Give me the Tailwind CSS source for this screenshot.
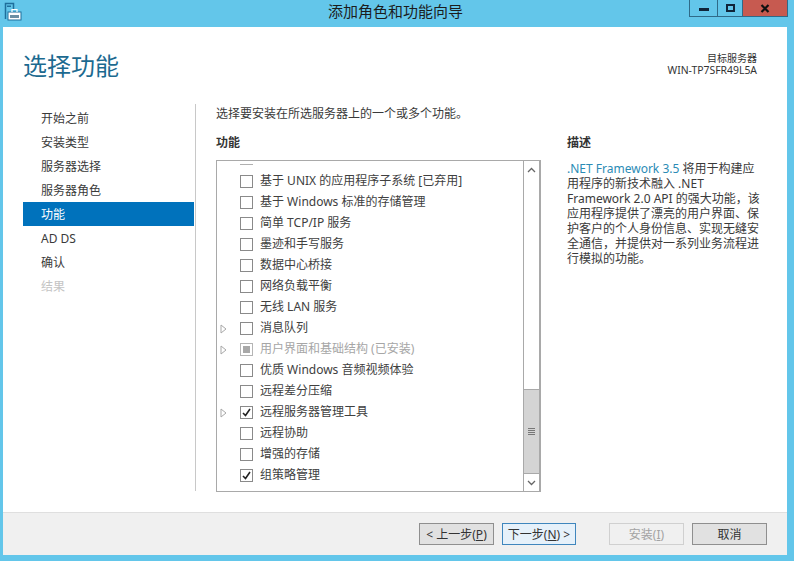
<!DOCTYPE html>
<html lang="zh-CN">
<head>
    <meta charset="UTF-8">
    <title>添加角色和功能向导</title>
    <script src="https://cdn.jsdelivr.net/npm/@tailwindcss/browser@4"></script>
</head>
<body class="m-0 overflow-hidden">
<div class="w-[794px] h-[561px] bg-[#63c6ea] flex flex-col text-[12px] text-[#3a3a3a] font-['Noto_Sans','Noto_Sans_CJK_SC',sans-serif]">
    <!-- Title bar -->
    <header class="h-[27px] shrink-0 flex relative">
        <svg class="absolute left-[4px] top-[2px]" width="18" height="20" viewBox="0 0 18 20" fill="none">
            <path d="M1.5 17V1.5H9.5V7" stroke="#1f6f9c" stroke-width="1.5"/>
            <rect x="3" y="3.5" width="4" height="1.5" fill="#1f6f9c"/>
            <rect x="4" y="10" width="13" height="8" fill="#fff" stroke="#1f6f9c"/>
            <path d="M8 10V7.5H13V10" stroke="#fff" stroke-width="1.2"/>
            <rect x="6" y="13" width="9" height="3" fill="#6b8fa3"/>
        </svg>
        <div class="flex-1 text-center text-[15px] leading-[23px] text-[#1c1c1c] pl-[102px]">添加角色和功能向导</div>
        <div class="flex h-[17px] mr-[6px] border border-t-0 border-[#2f6a88]">
            <div class="w-[28px] flex items-center justify-center border-r border-[#2f6a88]"><span class="w-[10px] h-[3px] mt-[3px] bg-[#10253a]"></span></div>
            <div class="w-[25px] flex items-center justify-center border-r border-[#2f6a88]"><span class="w-[9px] h-[8px] border-2 border-[#10253a]"></span></div>
            <div class="w-[44px] bg-[#c75a50] flex items-center justify-center">
                <svg width="10" height="9" viewBox="0 0 10 9"><path d="M1.5 1L8.5 8M8.5 1L1.5 8" stroke="#111" stroke-width="2.2"/></svg>
            </div>
        </div>
    </header>

    <div class="flex-1 ml-[3px] mr-[7px] mb-[6px] bg-white flex flex-col min-h-0">
        <!-- Page heading -->
        <div class="h-[77px] shrink-0 flex justify-between pl-[20px] pr-[30px]">
            <h1 class="text-[24px] leading-[32px] mt-[23px] text-[#1c6a90]">选择功能</h1>
            <div class="text-right text-[10px] leading-[12px] mt-[25px] text-[#333]">
                <div>目标服务器</div>
                <div class="text-[10.4px]">WIN-TP7SFR49L5A</div>
            </div>
        </div>

        <div class="flex-1 flex min-h-0">
            <!-- Step nav -->
            <nav class="w-[171px] ml-[20px] shrink-0 pt-[2px]">
                <div class="h-[24px] leading-[26px] pl-[18px]">开始之前</div>
                <div class="h-[24px] leading-[26px] pl-[18px]">安装类型</div>
                <div class="h-[24px] leading-[26px] pl-[18px]">服务器选择</div>
                <div class="h-[24px] leading-[26px] pl-[18px]">服务器角色</div>
                <div class="h-[24px] leading-[26px] pl-[18px] bg-[#0072bc] text-white">功能</div>
                <div class="h-[24px] leading-[26px] pl-[18px]">AD DS</div>
                <div class="h-[24px] leading-[26px] pl-[18px]">确认</div>
                <div class="h-[24px] leading-[26px] pl-[18px] text-[#c4c4c4]">结果</div>
            </nav>
            <div class="w-px h-[387px] bg-[#c8c8c8] ml-[1px]"></div>

            <!-- Feature picker -->
            <main class="flex-1 pl-[20px] min-w-0">
                <p class="leading-[18px] mt-[1px]">选择要安装在所选服务器上的一个或多个功能。</p>
                <div class="flex mt-[11px]">
                    <section class="w-[325px] shrink-0">
                        <h2 class="font-bold leading-[18px] text-[#333]">功能</h2>
                        <div class="mt-[8px] h-[332px] border border-[#a9a9a9] flex">
                            <div class="flex-1 overflow-hidden min-w-0">
                                <div class="h-[9px] pl-[23px]"><div class="w-[13px] h-[4px] border-b border-[#b0b0b0]"></div></div>
                                <ul class="text-[#404040]">
                                    <li class="h-[21px] flex items-center pl-[23px]"><span class="w-[13px] h-[13px] mt-[2px] border border-[#8a8a8a] bg-white shrink-0 mr-[7px]"></span>基于 UNIX 的应用程序子系统 [已弃用]</li>
                                    <li class="h-[21px] flex items-center pl-[23px]"><span class="w-[13px] h-[13px] mt-[2px] border border-[#8a8a8a] bg-white shrink-0 mr-[7px]"></span>基于 Windows 标准的存储管理</li>
                                    <li class="h-[21px] flex items-center pl-[23px]"><span class="w-[13px] h-[13px] mt-[2px] border border-[#8a8a8a] bg-white shrink-0 mr-[7px]"></span>简单 TCP/IP 服务</li>
                                    <li class="h-[21px] flex items-center pl-[23px]"><span class="w-[13px] h-[13px] mt-[2px] border border-[#8a8a8a] bg-white shrink-0 mr-[7px]"></span>墨迹和手写服务</li>
                                    <li class="h-[21px] flex items-center pl-[23px]"><span class="w-[13px] h-[13px] mt-[2px] border border-[#8a8a8a] bg-white shrink-0 mr-[7px]"></span>数据中心桥接</li>
                                    <li class="h-[21px] flex items-center pl-[23px]"><span class="w-[13px] h-[13px] mt-[2px] border border-[#8a8a8a] bg-white shrink-0 mr-[7px]"></span>网络负载平衡</li>
                                    <li class="h-[21px] flex items-center pl-[23px]"><span class="w-[13px] h-[13px] mt-[2px] border border-[#8a8a8a] bg-white shrink-0 mr-[7px]"></span>无线 LAN 服务</li>
                                    <li class="h-[21px] flex items-center pl-[3px]">
                                        <svg class="mr-[13px] mt-[2px] shrink-0" width="7" height="10" viewBox="0 0 7 10"><path d="M1 1L6 5L1 9Z" fill="#fff" stroke="#a8a8a8"/></svg>
                                        <span class="w-[13px] h-[13px] mt-[2px] border border-[#8a8a8a] bg-white shrink-0 mr-[7px]"></span>消息队列</li>
                                    <li class="h-[21px] flex items-center pl-[3px] text-[#a6a6a6]">
                                        <svg class="mr-[13px] mt-[2px] shrink-0" width="7" height="10" viewBox="0 0 7 10"><path d="M1 1L6 5L1 9Z" fill="#fff" stroke="#a8a8a8"/></svg>
                                        <span class="w-[13px] h-[13px] mt-[2px] border border-[#b5b5b5] bg-white shrink-0 mr-[7px] flex items-center justify-center"><span class="w-[7px] h-[7px] bg-[#a8a8a8]"></span></span>用户界面和基础结构 (已安装)</li>
                                    <li class="h-[21px] flex items-center pl-[23px]"><span class="w-[13px] h-[13px] mt-[2px] border border-[#8a8a8a] bg-white shrink-0 mr-[7px]"></span>优质 Windows 音频视频体验</li>
                                    <li class="h-[21px] flex items-center pl-[23px]"><span class="w-[13px] h-[13px] mt-[2px] border border-[#8a8a8a] bg-white shrink-0 mr-[7px]"></span>远程差分压缩</li>
                                    <li class="h-[21px] flex items-center pl-[3px]">
                                        <svg class="mr-[13px] mt-[2px] shrink-0" width="7" height="10" viewBox="0 0 7 10"><path d="M1 1L6 5L1 9Z" fill="#fff" stroke="#a8a8a8"/></svg>
                                        <span class="w-[13px] h-[13px] mt-[2px] border border-[#8a8a8a] bg-white shrink-0 mr-[7px] flex items-center justify-center"><svg width="9" height="9" viewBox="0 0 9 9"><path d="M1 5L3.5 7.5L8 1" fill="none" stroke="#222" stroke-width="1.6"/></svg></span>远程服务器管理工具</li>
                                    <li class="h-[21px] flex items-center pl-[23px]"><span class="w-[13px] h-[13px] mt-[2px] border border-[#8a8a8a] bg-white shrink-0 mr-[7px]"></span>远程协助</li>
                                    <li class="h-[21px] flex items-center pl-[23px]"><span class="w-[13px] h-[13px] mt-[2px] border border-[#8a8a8a] bg-white shrink-0 mr-[7px]"></span>增强的存储</li>
                                    <li class="h-[21px] flex items-center pl-[23px]"><span class="w-[13px] h-[13px] mt-[2px] border border-[#8a8a8a] bg-white shrink-0 mr-[7px] flex items-center justify-center"><svg width="9" height="9" viewBox="0 0 9 9"><path d="M1 5L3.5 7.5L8 1" fill="none" stroke="#222" stroke-width="1.6"/></svg></span>组策略管理</li>
                                </ul>
                            </div>
                            <!-- Scrollbar -->
                            <div class="w-[17px] shrink-0 border-x border-[#a9a9a9] flex flex-col">
                                <div class="h-[17px] flex items-center justify-center"><svg width="9" height="6" viewBox="0 0 9 6"><path d="M1 5L4.5 1.5L8 5" fill="none" stroke="#666" stroke-width="1.3"/></svg></div>
                                <div class="flex-1"></div>
                                <div class="h-[85px] bg-[#d4d4d4] border-y border-[#a9a9a9] flex flex-col items-center justify-center gap-[1px]">
                                    <span class="w-[7px] h-px bg-[#777]"></span><span class="w-[7px] h-px bg-[#777]"></span><span class="w-[7px] h-px bg-[#777]"></span><span class="w-[7px] h-px bg-[#777]"></span>
                                </div>
                                <div class="h-[17px] flex items-center justify-center"><svg width="9" height="6" viewBox="0 0 9 6"><path d="M1 1L4.5 4.5L8 1" fill="none" stroke="#666" stroke-width="1.3"/></svg></div>
                            </div>
                        </div>
                    </section>
                    <!-- Description -->
                    <aside class="ml-[26px] flex-1">
                        <h2 class="font-bold leading-[18px] text-[#333]">描述</h2>
                        <p class="mt-[9px] leading-[15px] whitespace-nowrap"><span class="text-[#2b8bb5]">.NET Framework 3.5</span> 将用于构建应<br>用程序的新技术融入 .NET<br>Framework 2.0 API 的强大功能，该<br>应用程序提供了漂亮的用户界面、保<br>护客户的个人身份信息、实现无缝安<br>全通信，并提供对一系列业务流程进<br>行模拟的功能。</p>
                    </aside>
                </div>
            </main>
        </div>

        <!-- Footer -->
        <footer class="h-[43px] shrink-0 bg-[#f0f0f0] border-t border-[#dfdfdf] flex items-start justify-end pt-[10px] pr-[20px]">
            <button class="w-[75px] h-[22px] pt-[1px] bg-[#e1e1e1] border border-[#8f8f8f] text-[12px] leading-[19px] text-[#333]">&lt; 上一步(<u>P</u>)</button>
            <button class="w-[74px] h-[22px] pt-[1px] ml-[8px] bg-[#e6f1fa] border border-[#3f86bd] text-[12px] leading-[19px] text-[#333]">下一步(<u>N</u>) &gt;</button>
            <button class="w-[75px] h-[22px] pt-[1px] ml-[33px] bg-[#f0f0f0] border border-[#d0d0d0] text-[12px] leading-[19px] text-[#a3a3a3]">安装(<u>I</u>)</button>
            <button class="w-[75px] h-[22px] pt-[1px] ml-[8px] bg-[#e1e1e1] border border-[#8f8f8f] text-[12px] leading-[19px] text-[#333]">取消</button>
        </footer>
    </div>
</div>
</body>
</html>
